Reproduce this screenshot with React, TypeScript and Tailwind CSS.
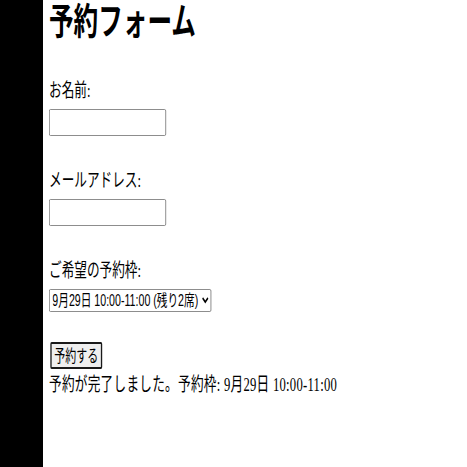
import React from "react";

export default function App() {
  return (
    <div className="flex h-[467px] w-[467px] overflow-hidden bg-white text-black">
      <div className="w-[43px] shrink-0 bg-black" />
      <div className="pl-[6px]">
        <div className="flex w-[600px] origin-top-left flex-col items-start [transform:scaleX(0.665)] font-['Liberation_Serif','Noto_Sans_CJK_JP',serif]">
          <h1 className="m-0 mt-[4px] text-[37px] font-bold leading-[37px]">予約フォーム</h1>
          <label className="mt-[40px] text-[19px] leading-[19px]">お名前:</label>
          <input
            type="text"
            className="mt-[9px] h-[27px] w-[176px] rounded-[2px] border border-[#767676] bg-white"
          />
          <label className="mt-[35px] text-[19px] leading-[19px]">メールアドレス:</label>
          <input
            type="email"
            className="mt-[9px] h-[27px] w-[176px] rounded-[2px] border border-[#767676] bg-white"
          />
          <label className="mt-[35px] text-[19px] leading-[19px]">ご希望の予約枠:</label>
          <select
            className="mt-[9px] h-[23px] rounded-[2px] border border-[#767676] bg-white pr-[2px] text-[16px] font-['Liberation_Sans','Noto_Sans_CJK_JP',sans-serif] [appearance:auto]"
            defaultValue="a"
          >
            <option value="a">9月29日 10:00-11:00 (残り2席)</option>
            <option value="b">9月29日 11:00-12:00 (残り5席)</option>
          </select>
          <button
            type="button"
            className="ml-[2px] mt-[30px] h-[27px] w-[78px] rounded-[2px] border-2 border-[#1a1a1a] bg-[#efefef] text-[16.5px] leading-[16.5px] font-['Noto_Sans_CJK_JP',sans-serif]"
          >
            予約する
          </button>
          <p className="mt-[6px] text-[19px] leading-[19px] tracking-[0.4px]">
            予約が完了しました。予約枠: 9月29日 10:00-11:00
          </p>
        </div>
      </div>
    </div>
  );
}
